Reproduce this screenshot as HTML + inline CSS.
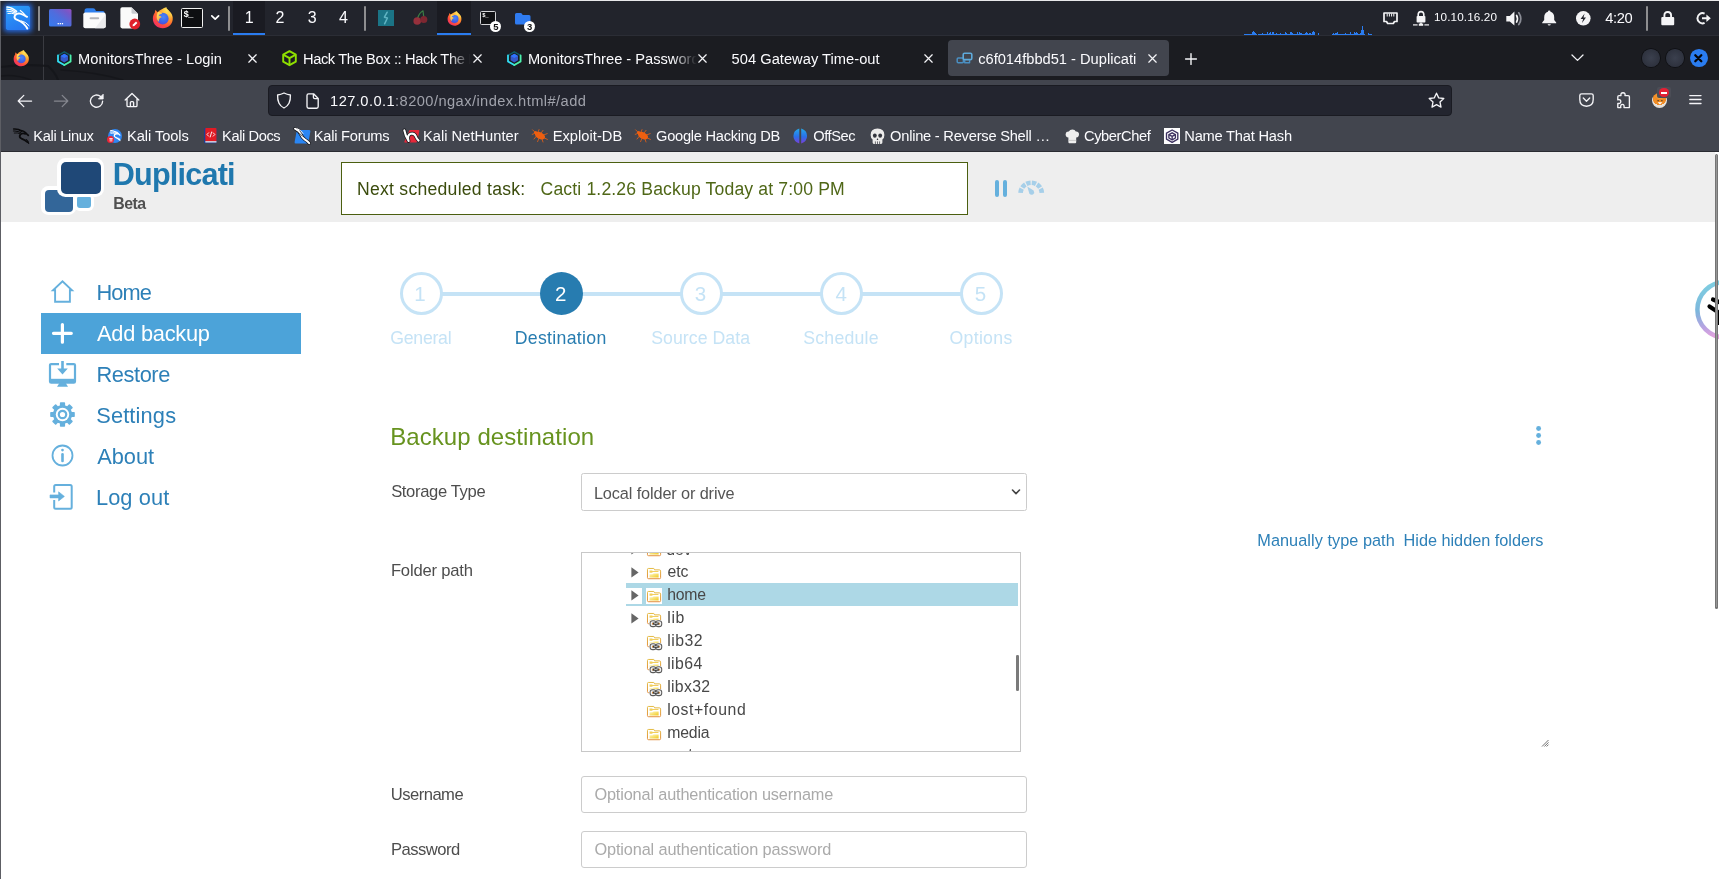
<!DOCTYPE html><html lang="en"><head><meta charset="utf-8"><title>c6f014fbbd51 - Duplicati</title><style>
*{box-sizing:border-box;margin:0;padding:0}
html,body{width:1719px;height:879px;overflow:hidden;background:#fff}
body{position:relative;font-family:'Liberation Sans',sans-serif}
#root{position:absolute;left:0;top:0;width:1719px;height:879px;will-change:transform}
.a{position:absolute}
.t{position:absolute;white-space:pre;line-height:1;display:block}
svg{position:absolute;overflow:visible}
#panel{left:0;top:0;width:1719px;height:36px;background:#22242c}
#tabbar{left:0;top:36px;width:1719px;height:44px;background:#1b1c21}
#navbar{left:0;top:80px;width:1719px;height:40px;background:#42454e}
#bmbar{left:0;top:120px;width:1719px;height:32px;background:#42454e}
#page{left:0;top:152px;width:1719px;height:727px;background:#fff}
#hdr{left:1px;top:152px;width:1714px;height:70px;background:#eeeeee}
.inp{border:1px solid #ccc;border-radius:3px;background:#fff}
</style></head><body><div id="root">
<div class="a" id="panel"></div>
<div class="a" style="left:0;top:0;width:1719px;height:1px;background:#e8e8ea"></div>
<div class="a" style="left:0;top:35px;width:1719px;height:1px;background:#2b2d35"></div>
<div class="a" style="left:38px;top:6px;width:2px;height:25px;background:#8e8e90;border-radius:1px"></div>
<div class="a" style="left:228px;top:6px;width:2px;height:25px;background:#8e8e90;border-radius:1px"></div>
<div class="a" style="left:364px;top:6px;width:2px;height:25px;background:#8e8e90;border-radius:1px"></div>
<div class="a" style="left:1646px;top:6px;width:2px;height:25px;background:#8e8e90;border-radius:1px"></div>
<div class="a" style="left:233px;top:1px;width:32px;height:34px;background:#1a1b22"></div>
<div class="a" style="left:233px;top:33px;width:32px;height:2px;background:#2a7cf0"></div>
<div class="a" style="left:437px;top:1px;width:34px;height:34px;background:#1a1b22"></div>
<div class="a" style="left:437px;top:33px;width:34px;height:2px;background:#2a7cf0"></div>
<span class="t" id="t0" style="left:244.69px;top:9.76px;font-size:16px;color:#fbfbfe;letter-spacing:0.000px;">1</span>
<span class="t" id="t1" style="left:275.44px;top:9.76px;font-size:16px;color:#fbfbfe;letter-spacing:0.000px;">2</span>
<span class="t" id="t2" style="left:307.79px;top:9.76px;font-size:16px;color:#fbfbfe;letter-spacing:0.000px;">3</span>
<span class="t" id="t3" style="left:339.08px;top:9.76px;font-size:16px;color:#fbfbfe;letter-spacing:0.000px;">4</span>
<span class="t" id="t4" style="left:1433.97px;top:11.00px;font-size:11.7px;color:#fbfbfe;letter-spacing:0.122px;">10.10.16.20</span>
<span class="t" id="t5" style="left:1605.34px;top:10.56px;font-size:14.7px;color:#fbfbfe;letter-spacing:-0.441px;">4:20</span>
<div class="a" style="left:5.8px;top:5.8px;width:24.3px;height:24.3px;border-radius:1.5px;background:linear-gradient(160deg,#2aa0fb,#2672ee);box-shadow:0 0 5px 1.5px rgba(38,118,255,.85)"></div><svg style="left:6px;top:6px" width="24" height="24" viewBox="0 0 24 24" preserveAspectRatio="none" ><g fill="none" stroke="#fff" stroke-linecap="round" stroke-linejoin="round">
<path d="M0.9 1.1 Q6 1.4 10.6 5.4" stroke-width="1.5"/><path d="M0.9 3.2 Q5.5 3.2 10 6.2" stroke-width="1.3"/><path d="M1.2 5.3 Q5 5 9.4 7" stroke-width="1.1"/><path d="M1.9 7.4 Q5.5 6.8 9 8" stroke-width="1"/>
<path d="M21 10.8 Q17.5 8.8 14.3 7.6 Q11 6.8 9.2 9 Q7.4 11.8 10.2 13.4 Q14.6 15 17.5 17.6 Q20 20 21.3 22.5" stroke-width="2"/>
<path d="M14.3 4.5 Q16.8 6.4 19 9" stroke-width="1.2"/>
<path d="M15.2 14.8 Q20 15.8 23 19.6" stroke-width="1"/></g></svg><svg style="left:49px;top:9px" width="22.5" height="17.5" viewBox="0 0 22.5 17.5" preserveAspectRatio="none" ><defs><linearGradient id="g1" x1="0" y1="1" x2="1" y2="0"><stop offset="0" stop-color="#357bee"/><stop offset="0.5" stop-color="#4f6ddd"/><stop offset="0.8" stop-color="#7359c9"/><stop offset="1" stop-color="#9650c0"/></linearGradient></defs><rect width="22.5" height="17.5" rx="1.5" fill="url(#g1)"/><g fill="#fff"><rect x="8.6" y="14" width="1.3" height="1.3"/><rect x="10.7" y="14" width="1.3" height="1.3"/><rect x="12.8" y="14" width="1.3" height="1.3"/></g></svg><svg style="left:82.7px;top:8px" width="22.4" height="20.5" viewBox="0 0 22.4 20.5" preserveAspectRatio="none" ><path d="M1.5 3 Q1.5 0.3 4 0.3 L10 0.3 Q11.5 0.3 12.2 1.5 L13 3 L20 3 Q21.5 3 21.5 4.5 L21.5 8 L1.5 8Z" fill="#2f7fec"/>
<path d="M0.3 6.5 Q0.3 4.6 2.3 4.6 L20.7 4.6 Q22.7 4.6 22.7 6.5 L22.7 18.3 Q22.7 20.2 20.7 20.2 L2.3 20.2 Q0.3 20.2 0.3 18.3Z" fill="#fbfbfb"/>
<path d="M22.7 6.5 L22.7 18.3 Q22.7 20.2 20.7 20.2 L12 20.2Z" fill="#ececee"/><rect x="6.6" y="9.3" width="9.6" height="2" rx="1" fill="#b4b5b9"/></svg><svg style="left:119.5px;top:7px" width="22" height="22" viewBox="0 0 22 22" preserveAspectRatio="none" ><path d="M2.2 0.3 L11.5 0.3 L18 6.8 L18 19.6 Q18 21.4 16.2 21.4 L2.2 21.4 Q0.4 21.4 0.4 19.6 L0.4 2.1 Q0.4 0.3 2.2 0.3Z" fill="#fafafa"/>
<path d="M11.5 0.3 L18 6.8 L13 6.8 Q11.5 6.8 11.5 5.3Z" fill="#c9cbd0"/>
<circle cx="14.8" cy="17" r="5.4" fill="#e0202b"/><path d="M12.6 19.3 L12.9 17.6 L16 14.5 L17.4 15.9 L14.3 19 Z" fill="#fff"/></svg><svg style="left:151.5px;top:7px" width="21.6" height="21.6" viewBox="0 0 100 100" preserveAspectRatio="none" ><defs>
<radialGradient id="g2" cx="0.78" cy="0.12" r="1.0"><stop offset="0" stop-color="#fff36b"/><stop offset="0.3" stop-color="#ffbd3f"/><stop offset="0.55" stop-color="#ff8a2a"/><stop offset="0.8" stop-color="#ff4a3c"/><stop offset="1" stop-color="#ee2f68"/></radialGradient>
<radialGradient id="g3" cx="0.55" cy="0.35" r="0.7"><stop offset="0" stop-color="#4a86fa"/><stop offset="0.6" stop-color="#3f66ea"/><stop offset="1" stop-color="#5a45d0"/></radialGradient>
<linearGradient id="g4" x1="0" y1="0" x2="1" y2="1"><stop offset="0" stop-color="#fff36b"/><stop offset="1" stop-color="#ff9a2a"/></linearGradient></defs>
<path d="M50 8 C58 2 62 4 66 0 C68 10 76 14 82 22 C92 30 98 44 96 58 C94 82 74 98 50 98 C24 98 4 80 4 54 C4 44 7 34 13 27 C13 22 14 17 17 13 C19 19 23 22 27 24 C33 16 41 12 50 8Z" fill="url(#g2)"/>
<circle cx="50" cy="54" r="27" fill="url(#g3)"/>
<path d="M27 24 C36 22 44 26 48 33 C40 31 33 35 31 41 C37 40 43 43 45 48 C36 50 30 58 33 68 C22 62 18 46 27 24Z" fill="url(#g4)" opacity="0.95"/>
<path d="M66 0 C68 10 76 14 82 22 C90 30 93 40 92 50 C88 38 80 32 72 30 C74 20 70 10 66 0Z" fill="#ffd04a" opacity="0.9"/></svg><div class="a" style="left:181px;top:8px;width:22px;height:20px;background:#0d0e11;border:1.3px solid #f2f2f2;border-radius:1.5px"></div><span class="a" style="left:183.5px;top:11.2px;font-size:9px;line-height:9px;font-weight:700;color:#fff;font-family:'Liberation Mono',monospace;letter-spacing:-1px">$_</span><svg style="left:210.3px;top:14.4px" width="11" height="8" viewBox="0 0 11 8" preserveAspectRatio="none" ><path d="M1.8 1.8 L5.2 5.2 L8.6 1.8" fill="none" stroke="#fff" stroke-width="1.7" stroke-linecap="round" stroke-linejoin="round"/></svg><div class="a" style="left:378px;top:10px;width:16px;height:16px;background:#1b7486"></div><svg style="left:378px;top:10px" width="16" height="16" viewBox="0 0 16 16" preserveAspectRatio="none" ><path d="M9.2 2.2 L6.4 7.2 L9.4 8 L6.6 13.8" fill="none" stroke="#5fb3c2" stroke-width="1.5" stroke-linejoin="round" stroke-linecap="round"/></svg><svg style="left:412.5px;top:10px" width="15" height="15.5" viewBox="0 0 15 15.5" preserveAspectRatio="none" ><path d="M10 0.8 Q6 3 4.6 8.5 M10 0.8 Q10.5 5 11 8" fill="none" stroke="#3a7f45" stroke-width="1.2" stroke-linecap="round"/>
<circle cx="4.2" cy="11" r="3.8" fill="#96303c"/><circle cx="10.8" cy="9.6" r="3.5" fill="#7d2731"/></svg><svg style="left:446.5px;top:10.5px" width="15" height="15" viewBox="0 0 100 100" preserveAspectRatio="none" ><defs>
<radialGradient id="g5" cx="0.78" cy="0.12" r="1.0"><stop offset="0" stop-color="#fff36b"/><stop offset="0.3" stop-color="#ffbd3f"/><stop offset="0.55" stop-color="#ff8a2a"/><stop offset="0.8" stop-color="#ff4a3c"/><stop offset="1" stop-color="#ee2f68"/></radialGradient>
<radialGradient id="g6" cx="0.55" cy="0.35" r="0.7"><stop offset="0" stop-color="#4a86fa"/><stop offset="0.6" stop-color="#3f66ea"/><stop offset="1" stop-color="#5a45d0"/></radialGradient>
<linearGradient id="g7" x1="0" y1="0" x2="1" y2="1"><stop offset="0" stop-color="#fff36b"/><stop offset="1" stop-color="#ff9a2a"/></linearGradient></defs>
<path d="M50 8 C58 2 62 4 66 0 C68 10 76 14 82 22 C92 30 98 44 96 58 C94 82 74 98 50 98 C24 98 4 80 4 54 C4 44 7 34 13 27 C13 22 14 17 17 13 C19 19 23 22 27 24 C33 16 41 12 50 8Z" fill="url(#g5)"/>
<circle cx="50" cy="54" r="27" fill="url(#g6)"/>
<path d="M27 24 C36 22 44 26 48 33 C40 31 33 35 31 41 C37 40 43 43 45 48 C36 50 30 58 33 68 C22 62 18 46 27 24Z" fill="url(#g7)" opacity="0.95"/>
<path d="M66 0 C68 10 76 14 82 22 C90 30 93 40 92 50 C88 38 80 32 72 30 C74 20 70 10 66 0Z" fill="#ffd04a" opacity="0.9"/></svg><div class="a" style="left:480px;top:11px;width:16px;height:13.5px;background:#101114;border:1.3px solid #d4d5d8;border-radius:1.5px"></div><span class="a" style="left:482.3px;top:12.6px;font-size:5.5px;line-height:6px;font-weight:700;color:#fff;font-family:'Liberation Mono',monospace;letter-spacing:-0.4px">$_</span><div class="a" style="left:490.3px;top:21.1px;width:11px;height:11px;border-radius:50%;background:#fff"></div><span class="a" style="left:490.3px;top:21.1px;width:11px;height:11px;line-height:11px;text-align:center;font-size:9.5px;font-weight:700;color:#111">5</span><svg style="left:514.5px;top:12.5px" width="15.5" height="11.5" viewBox="0 0 15.5 11.5" preserveAspectRatio="none" ><path d="M0 1.5 Q0 0 1.5 0 L5.5 0 Q6.6 0 7.1 0.9 L7.7 2 L14 2 Q15.5 2 15.5 3.5 L15.5 10 Q15.5 11.5 14 11.5 L1.5 11.5 Q0 11.5 0 10Z" fill="#2f7bf0"/></svg><div class="a" style="left:524.2px;top:21.1px;width:11px;height:11px;border-radius:50%;background:#fff"></div><span class="a" style="left:524.2px;top:21.1px;width:11px;height:11px;line-height:11px;text-align:center;font-size:9.5px;font-weight:700;color:#111">3</span><svg style="left:1244px;top:26px" width="128" height="9" viewBox="0 0 128 9" preserveAspectRatio="none" ><g fill="#2a7cf0"><rect x="0" y="8" width="1" height="1"/><rect x="1" y="8" width="1" height="1"/><rect x="2" y="8" width="1" height="1"/><rect x="3" y="8" width="1" height="1"/><rect x="4" y="8" width="1" height="1"/><rect x="5" y="8" width="1" height="1"/><rect x="6" y="8" width="1" height="1"/><rect x="7" y="8" width="1" height="1"/><rect x="8" y="6" width="1" height="3"/><rect x="9" y="5" width="1" height="4"/><rect x="10" y="6" width="1" height="3"/><rect x="11" y="7" width="1" height="2"/><rect x="12" y="8" width="1" height="1"/><rect x="14" y="8" width="1" height="1"/><rect x="15" y="8" width="1" height="1"/><rect x="16" y="8" width="1" height="1"/><rect x="17" y="8" width="1" height="1"/><rect x="18" y="7" width="1" height="2"/><rect x="19" y="8" width="1" height="1"/><rect x="20" y="8" width="1" height="1"/><rect x="21" y="8" width="1" height="1"/><rect x="22" y="8" width="1" height="1"/><rect x="23" y="6" width="1" height="3"/><rect x="24" y="8" width="1" height="1"/><rect x="25" y="7" width="1" height="2"/><rect x="26" y="6" width="1" height="3"/><rect x="27" y="8" width="1" height="1"/><rect x="28" y="6" width="1" height="3"/><rect x="29" y="6" width="1" height="3"/><rect x="30" y="8" width="1" height="1"/><rect x="31" y="8" width="1" height="1"/><rect x="32" y="7" width="1" height="2"/><rect x="33" y="8" width="1" height="1"/><rect x="34" y="8" width="1" height="1"/><rect x="35" y="8" width="1" height="1"/><rect x="36" y="7" width="1" height="2"/><rect x="37" y="8" width="1" height="1"/><rect x="38" y="8" width="1" height="1"/><rect x="39" y="8" width="1" height="1"/><rect x="40" y="8" width="1" height="1"/><rect x="41" y="6" width="1" height="3"/><rect x="42" y="7" width="1" height="2"/><rect x="43" y="8" width="1" height="1"/><rect x="44" y="8" width="1" height="1"/><rect x="45" y="8" width="1" height="1"/><rect x="46" y="6" width="1" height="3"/><rect x="47" y="6" width="1" height="3"/><rect x="48" y="7" width="1" height="2"/><rect x="49" y="8" width="1" height="1"/><rect x="50" y="8" width="1" height="1"/><rect x="51" y="8" width="1" height="1"/><rect x="52" y="8" width="1" height="1"/><rect x="53" y="6" width="1" height="3"/><rect x="54" y="8" width="1" height="1"/><rect x="55" y="6" width="1" height="3"/><rect x="56" y="7" width="1" height="2"/><rect x="57" y="7" width="1" height="2"/><rect x="58" y="8" width="1" height="1"/><rect x="59" y="8" width="1" height="1"/><rect x="60" y="8" width="1" height="1"/><rect x="61" y="7" width="1" height="2"/><rect x="62" y="6" width="1" height="3"/><rect x="63" y="7" width="1" height="2"/><rect x="64" y="8" width="1" height="1"/><rect x="65" y="7" width="1" height="2"/><rect x="66" y="7" width="1" height="2"/><rect x="67" y="8" width="1" height="1"/><rect x="68" y="6" width="1" height="3"/><rect x="69" y="5" width="1" height="4"/><rect x="70" y="6" width="1" height="3"/><rect x="74" y="7" width="1" height="2"/><rect x="88" y="8" width="1" height="1"/><rect x="89" y="7" width="1" height="2"/><rect x="90" y="8" width="1" height="1"/><rect x="91" y="7" width="1" height="2"/><rect x="92" y="7" width="1" height="2"/><rect x="93" y="6" width="1" height="3"/><rect x="94" y="8" width="1" height="1"/><rect x="95" y="8" width="1" height="1"/><rect x="96" y="8" width="1" height="1"/><rect x="97" y="8" width="1" height="1"/><rect x="98" y="8" width="1" height="1"/><rect x="99" y="8" width="1" height="1"/><rect x="100" y="8" width="1" height="1"/><rect x="101" y="7" width="1" height="2"/><rect x="102" y="8" width="1" height="1"/><rect x="103" y="8" width="1" height="1"/><rect x="104" y="8" width="1" height="1"/><rect x="105" y="8" width="1" height="1"/><rect x="106" y="6" width="1" height="3"/><rect x="107" y="8" width="1" height="1"/><rect x="108" y="8" width="1" height="1"/><rect x="109" y="8" width="1" height="1"/><rect x="110" y="6" width="1" height="3"/><rect x="111" y="7" width="1" height="2"/><rect x="112" y="6" width="1" height="3"/><rect x="113" y="7" width="1" height="2"/><rect x="114" y="8" width="1" height="1"/><rect x="115" y="8" width="1" height="1"/><rect x="116" y="7" width="1" height="2"/><rect x="117" y="4" width="1" height="5"/><rect x="118" y="0" width="1" height="9"/><rect x="119" y="4" width="1" height="5"/><rect x="120" y="8" width="1" height="1"/><rect x="124" y="7" width="1" height="2"/><rect x="125" y="8" width="1" height="1"/><rect x="126" y="8" width="1" height="1"/><rect x="127" y="8" width="1" height="1"/></g></svg><svg style="left:1383px;top:11.5px" width="15" height="12.5" viewBox="0 0 15 12.5" preserveAspectRatio="none" ><path d="M1 1 L14 1 L14 9.5 L11.5 9.5 L10.3 11.5 L4.7 11.5 L3.5 9.5 L1 9.5Z" fill="none" stroke="#f4f4f6" stroke-width="1.7" stroke-linejoin="round"/>
<path d="M4.2 1.5 V4.5 M6.4 1.5 V4.5 M8.6 1.5 V4.5 M10.8 1.5 V4.5" stroke="#f4f4f6" stroke-width="1"/></svg><svg style="left:1413px;top:10px" width="16" height="16" viewBox="0 0 16 16" preserveAspectRatio="none" ><path d="M5.2 6.5 V4.6 Q5.2 1.6 8 1.6 Q10.8 1.6 10.8 4.6 V6.5" fill="none" stroke="#f4f4f6" stroke-width="1.6"/>
<rect x="3.6" y="6" width="8.8" height="6.6" rx="0.8" fill="#f4f4f6"/>
<rect x="7.2" y="12.6" width="1.6" height="1.6" fill="#f4f4f6"/><rect x="5.8" y="13.6" width="4.4" height="2.2" fill="#f4f4f6"/>
<rect x="0" y="14.3" width="4.6" height="1.2" fill="#f4f4f6"/><rect x="11.4" y="14.3" width="4.6" height="1.2" fill="#f4f4f6"/></svg><svg style="left:1506px;top:10.5px" width="17.5" height="15.5" viewBox="0 0 17.5 15.5" preserveAspectRatio="none" ><path d="M0.3 5 L3.8 5 L8.4 0.6 L8.4 14.6 L3.8 10.4 L0.3 10.4Z" fill="#f4f4f6"/>
<path d="M10.6 4.4 Q12.4 7.7 10.6 11" fill="none" stroke="#f4f4f6" stroke-width="1.7" stroke-linecap="round"/>
<path d="M12.8 1.8 Q16.8 7.7 12.8 13.6" fill="none" stroke="#8b8d96" stroke-width="1.7" stroke-linecap="round"/></svg><svg style="left:1542px;top:9.5px" width="14.5" height="16" viewBox="0 0 14.5 16" preserveAspectRatio="none" ><path d="M7.2 0.4 Q8.5 0.4 8.5 1.7 Q12.2 2.8 12.2 7.2 L12.2 10 L14.2 12.4 L14.2 13.2 L0.2 13.2 L0.2 12.4 L2.2 10 L2.2 7.2 Q2.2 2.8 5.9 1.7 Q5.9 0.4 7.2 0.4Z" fill="#f4f4f6"/>
<path d="M5.6 14.2 L8.8 14.2 Q8.6 15.6 7.2 15.6 Q5.8 15.6 5.6 14.2Z" fill="#f4f4f6"/></svg><svg style="left:1575.5px;top:11px" width="14.6" height="14.6" viewBox="0 0 14.6 14.6" preserveAspectRatio="none" ><circle cx="7.3" cy="7.3" r="7.3" fill="#f4f4f6"/><path d="M8.6 2.6 L4.6 8 L7.1 8 L6 12 L10 6.6 L7.5 6.6Z" fill="#22242c"/></svg><svg style="left:1661px;top:11px" width="13.5" height="14.5" viewBox="0 0 13.5 14.5" preserveAspectRatio="none" ><path d="M3.4 6.4 V4.6 Q3.4 1 6.75 1 Q10.1 1 10.1 4.6 V6.4" fill="none" stroke="#f4f4f6" stroke-width="1.9"/><rect x="0.3" y="6" width="12.9" height="8.3" rx="1" fill="#f4f4f6"/></svg><svg style="left:1695.5px;top:12px" width="15" height="12.5" viewBox="0 0 15 12.5" preserveAspectRatio="none" ><path d="M8.6 1.6 A5.1 5.1 0 1 0 8.6 10.9" fill="none" stroke="#f4f4f6" stroke-width="2" stroke-linecap="butt"/><path d="M6 5.2 L10.4 5.2 L10.4 2.6 L14.8 6.25 L10.4 9.9 L10.4 7.3 L6 7.3Z" fill="#f4f4f6"/></svg>
<div class="a" id="tabbar"></div>
<div class="a" style="left:43px;top:36px;width:1px;height:44px;background:#3a3b41"></div>
<div class="a" style="left:948px;top:40px;width:221px;height:36px;background:#42454e;border-radius:4px"></div>
<span class="t" id="t6" style="left:78.05px;top:51.58px;font-size:14.67px;color:#fbfbfe;letter-spacing:0.028px;">MonitorsThree - Login</span>
<span class="t fade" id="t7" style="left:302.93px;top:51.58px;font-size:14.67px;color:#fbfbfe;letter-spacing:-0.374px;">Hack The Box :: Hack The B</span>
<span class="t fade" id="t8" style="left:527.93px;top:51.58px;font-size:14.67px;color:#fbfbfe;letter-spacing:-0.010px;">MonitorsThree - Password</span>
<span class="t" id="t9" style="left:731.54px;top:51.58px;font-size:14.67px;color:#fbfbfe;letter-spacing:0.034px;">504 Gateway Time-out</span>
<span class="t" id="t10" style="left:978.16px;top:51.58px;font-size:14.67px;color:#fbfbfe;letter-spacing:-0.000px;">c6f014fbbd51 - Duplicati</span>
<svg style="left:1px;top:36px" width="260" height="44" viewBox="0 0 260 44" preserveAspectRatio="none" ><g fill="none" stroke="#15161a" stroke-linecap="round" opacity="0.85"><path d="M0 31 Q22 28 47 30 Q54 36 57 44" stroke-width="2.2"/><path d="M60 34 Q95 36 122 44" stroke-width="1.6"/><path d="M0 40 Q14 38 30 44" stroke-width="1.4"/></g></svg><svg style="left:12.5px;top:50px" width="16.5" height="16.5" viewBox="0 0 100 100" preserveAspectRatio="none" ><defs>
<radialGradient id="g8" cx="0.78" cy="0.12" r="1.0"><stop offset="0" stop-color="#fff36b"/><stop offset="0.3" stop-color="#ffbd3f"/><stop offset="0.55" stop-color="#ff8a2a"/><stop offset="0.8" stop-color="#ff4a3c"/><stop offset="1" stop-color="#ee2f68"/></radialGradient>
<radialGradient id="g9" cx="0.55" cy="0.35" r="0.7"><stop offset="0" stop-color="#4a86fa"/><stop offset="0.6" stop-color="#3f66ea"/><stop offset="1" stop-color="#5a45d0"/></radialGradient>
<linearGradient id="g10" x1="0" y1="0" x2="1" y2="1"><stop offset="0" stop-color="#fff36b"/><stop offset="1" stop-color="#ff9a2a"/></linearGradient></defs>
<path d="M50 8 C58 2 62 4 66 0 C68 10 76 14 82 22 C92 30 98 44 96 58 C94 82 74 98 50 98 C24 98 4 80 4 54 C4 44 7 34 13 27 C13 22 14 17 17 13 C19 19 23 22 27 24 C33 16 41 12 50 8Z" fill="url(#g8)"/>
<circle cx="50" cy="54" r="27" fill="url(#g9)"/>
<path d="M27 24 C36 22 44 26 48 33 C40 31 33 35 31 41 C37 40 43 43 45 48 C36 50 30 58 33 68 C22 62 18 46 27 24Z" fill="url(#g10)" opacity="0.95"/>
<path d="M66 0 C68 10 76 14 82 22 C90 30 93 40 92 50 C88 38 80 32 72 30 C74 20 70 10 66 0Z" fill="#ffd04a" opacity="0.9"/></svg><svg style="left:56.9px;top:51px" width="14.6" height="14.8" viewBox="0 0 14.6 14.8" preserveAspectRatio="none" ><path d="M7.3 0.8 L13.6 4.3 L13.6 10.5 L7.3 14 L1 10.5 L1 4.3Z" fill="none" stroke="#0f5a66" stroke-width="1.5" stroke-linejoin="round"/>
<path d="M1 4.3 L1 10.5 L7.3 14" fill="none" stroke="#35dff5" stroke-width="1.7" stroke-linejoin="round" stroke-linecap="round"/>
<path d="M7.3 14 L13.6 10.5 L13.6 4.3" fill="none" stroke="#4ff0a8" stroke-width="1.7" stroke-linejoin="round" stroke-linecap="round"/>
<path d="M7.3 2.8 L11 4.9 L11 9.2 L7.3 11.4 L3.6 9.2 L3.6 4.9Z" fill="#3558c8"/><path d="M7.3 2.8 L11 4.9 L7.3 7 L3.6 4.9Z" fill="#2f74ff"/></svg><svg style="left:506.9px;top:51px" width="14.6" height="14.8" viewBox="0 0 14.6 14.8" preserveAspectRatio="none" ><path d="M7.3 0.8 L13.6 4.3 L13.6 10.5 L7.3 14 L1 10.5 L1 4.3Z" fill="none" stroke="#0f5a66" stroke-width="1.5" stroke-linejoin="round"/>
<path d="M1 4.3 L1 10.5 L7.3 14" fill="none" stroke="#35dff5" stroke-width="1.7" stroke-linejoin="round" stroke-linecap="round"/>
<path d="M7.3 14 L13.6 10.5 L13.6 4.3" fill="none" stroke="#4ff0a8" stroke-width="1.7" stroke-linejoin="round" stroke-linecap="round"/>
<path d="M7.3 2.8 L11 4.9 L11 9.2 L7.3 11.4 L3.6 9.2 L3.6 4.9Z" fill="#3558c8"/><path d="M7.3 2.8 L11 4.9 L7.3 7 L3.6 4.9Z" fill="#2f74ff"/></svg><svg style="left:281.5px;top:49.8px" width="15" height="16.4" viewBox="0 0 15 16.4" preserveAspectRatio="none" ><g fill="none" stroke="#8fe000" stroke-width="1.9" stroke-linejoin="round"><path d="M7.5 1.2 L13.8 4.7 L13.8 11.7 L7.5 15.2 L1.2 11.7 L1.2 4.7Z"/><path d="M1.2 4.7 L7.5 8.2 L13.8 4.7 M7.5 8.2 L7.5 15.2"/></g></svg><svg style="left:955.5px;top:52px" width="17" height="12" viewBox="0 0 17 12" preserveAspectRatio="none" ><g fill="none" stroke-linejoin="round"><rect x="1.2" y="6" width="6.2" height="4.8" rx="1" stroke="#4a8fc2" stroke-width="1.5"/>
<path d="M8.7 8.3 V10.8 H13.6 V8.3" stroke="#4a8fc2" stroke-width="1.4"/>
<rect x="7.2" y="1.2" width="8.6" height="6.4" rx="1.4" stroke="#5eaadb" stroke-width="1.6" fill="#42454e"/></g></svg><div class="a fd" style="left:449px;top:46px;width:36px;height:24px;background:linear-gradient(90deg,rgba(27,28,33,0),#1b1c21 60%)"></div><div class="a fd" style="left:673px;top:46px;width:36px;height:24px;background:linear-gradient(90deg,rgba(27,28,33,0),#1b1c21 66%)"></div><svg style="left:248.3px;top:53.9px" width="9" height="9" viewBox="0 0 9 9" preserveAspectRatio="none" ><path d="M0.8 0.8 L8.2 8.2 M8.2 0.8 L0.8 8.2" stroke="#f4f4f7" stroke-width="1.25" stroke-linecap="round"/></svg><svg style="left:473.4px;top:53.9px" width="9" height="9" viewBox="0 0 9 9" preserveAspectRatio="none" ><path d="M0.8 0.8 L8.2 8.2 M8.2 0.8 L0.8 8.2" stroke="#f4f4f7" stroke-width="1.25" stroke-linecap="round"/></svg><svg style="left:698.4px;top:53.9px" width="9" height="9" viewBox="0 0 9 9" preserveAspectRatio="none" ><path d="M0.8 0.8 L8.2 8.2 M8.2 0.8 L0.8 8.2" stroke="#f4f4f7" stroke-width="1.25" stroke-linecap="round"/></svg><svg style="left:923.6px;top:53.9px" width="9" height="9" viewBox="0 0 9 9" preserveAspectRatio="none" ><path d="M0.8 0.8 L8.2 8.2 M8.2 0.8 L0.8 8.2" stroke="#f4f4f7" stroke-width="1.25" stroke-linecap="round"/></svg><svg style="left:1148.4px;top:53.9px" width="9" height="9" viewBox="0 0 9 9" preserveAspectRatio="none" ><path d="M0.8 0.8 L8.2 8.2 M8.2 0.8 L0.8 8.2" stroke="#f4f4f7" stroke-width="1.25" stroke-linecap="round"/></svg><svg style="left:1184.5px;top:52.7px" width="12" height="12" viewBox="0 0 12 12" preserveAspectRatio="none" ><path d="M6 0.6 V11.4 M0.6 6 H11.4" stroke="#f4f4f7" stroke-width="1.4" stroke-linecap="round"/></svg><svg style="left:1570.5px;top:54px" width="13" height="8" viewBox="0 0 13 8" preserveAspectRatio="none" ><path d="M1 1 L6.5 6.4 L12 1" fill="none" stroke="#f4f4f7" stroke-width="1.3" stroke-linecap="round" stroke-linejoin="round"/></svg><div class="a" style="left:1642px;top:49.3px;width:17.6px;height:17.6px;border-radius:50%;background:radial-gradient(circle at 50% 50%,#3b404e 0,#2e323e 70%,#262a34 100%);box-shadow:0 0 0 0.8px #0d0e12"></div><div class="a" style="left:1666px;top:49.3px;width:17.6px;height:17.6px;border-radius:50%;background:radial-gradient(circle at 50% 50%,#3b404e 0,#2e323e 70%,#262a34 100%);box-shadow:0 0 0 0.8px #0d0e12"></div><div class="a" style="left:1689.8px;top:49.3px;width:17.8px;height:17.8px;border-radius:50%;background:#2a7cf0"></div><svg style="left:1694.4px;top:53.9px" width="8.6" height="8.6" viewBox="0 0 8.6 8.6" preserveAspectRatio="none" ><path d="M1.3 1.3 L7.3 7.3 M7.3 1.3 L1.3 7.3" stroke="#050508" stroke-width="2.3" stroke-linecap="round"/></svg>
<div class="a" id="navbar"></div>
<div class="a" id="bmbar"></div>
<div class="a" style="left:0;top:151px;width:1719px;height:1px;background:#2a2b31"></div>
<div class="a" style="left:268px;top:84.5px;width:1183.5px;height:31px;background:#23252f;border-radius:4px;border:1px solid #1a1b22"></div>
<span class="t" id="t11" style="left:330.12px;top:93.83px;font-size:14.67px;color:#fbfbfe;letter-spacing:0.428px;">127.0.0.1<span style="color:#a0a2ab">:8200/ngax/index.html#/add</span></span>
<svg style="left:17px;top:93.7px" width="15" height="14" viewBox="0 0 15 14" preserveAspectRatio="none" ><path d="M6.8 1.4 L1.2 7 L6.8 12.6 M1.4 7 H14.6" fill="none" stroke="#f4f4f7" stroke-width="1.25" stroke-linecap="round" stroke-linejoin="round"/></svg><svg style="left:53.5px;top:93.5px" width="15" height="14" viewBox="0 0 15 14" preserveAspectRatio="none" ><path d="M8.2 1.4 L13.8 7 L8.2 12.6 M13.6 7 H0.4" fill="none" stroke="#85878f" stroke-width="1.25" stroke-linecap="round" stroke-linejoin="round"/></svg><svg style="left:88.6px;top:92.5px" width="16" height="16" viewBox="0 0 16 16" preserveAspectRatio="none" ><path d="M13.6 8.2 A6.1 6.1 0 1 1 11.6 3.6" fill="none" stroke="#f4f4f7" stroke-width="1.35" stroke-linecap="round"/><path d="M14.2 1.2 L14.2 6 L9.4 6 Z" fill="#f4f4f7" stroke="#f4f4f7" stroke-width="0.8" stroke-linejoin="round"/></svg><svg style="left:123.8px;top:92px" width="16" height="16" viewBox="0 0 16 16" preserveAspectRatio="none" ><path d="M1.2 8 L8 1.4 L14.8 8 M3 6.6 V13.4 Q3 14.6 4.2 14.6 H11.8 Q13 14.6 13 13.4 V6.6 M6.4 14.4 V10.6 Q6.4 9.6 7.4 9.6 H8.6 Q9.6 9.6 9.6 10.6 V14.4" fill="none" stroke="#f4f4f7" stroke-width="1.35" stroke-linecap="round" stroke-linejoin="round"/></svg><svg style="left:276px;top:92px" width="16" height="17" viewBox="0 0 16 17" preserveAspectRatio="none" ><path d="M8 1 Q11 2.6 14.4 3 Q14.6 8 13 11.2 Q11.4 14.4 8 16 Q4.6 14.4 3 11.2 Q1.4 8 1.6 3 Q5 2.6 8 1Z" fill="none" stroke="#f4f4f7" stroke-width="1.35" stroke-linejoin="round"/></svg><svg style="left:305.5px;top:92.5px" width="13" height="16" viewBox="0 0 13 16" preserveAspectRatio="none" ><path d="M2.6 0.8 H7.6 L12.2 5.4 V13.6 Q12.2 15.2 10.6 15.2 H2.6 Q1 15.2 1 13.6 V2.4 Q1 0.8 2.6 0.8Z M7.4 1 V4.2 Q7.4 5.6 8.8 5.6 H12" fill="none" stroke="#f4f4f7" stroke-width="1.35" stroke-linejoin="round"/></svg><svg style="left:1427.5px;top:92px" width="17" height="16.5" viewBox="0 0 17 16.5" preserveAspectRatio="none" ><path d="M8.5 1.2 L10.7 5.9 L15.8 6.5 L12 10 L13 15.1 L8.5 12.6 L4 15.1 L5 10 L1.2 6.5 L6.3 5.9Z" fill="none" stroke="#f4f4f7" stroke-width="1.3" stroke-linejoin="round"/></svg><svg style="left:1579.3px;top:93.3px" width="15" height="14" viewBox="0 0 15 14" preserveAspectRatio="none" ><path d="M2.6 0.8 H12.4 Q14.2 0.8 14.2 2.6 V6.6 Q14.2 13.2 7.5 13.2 Q0.8 13.2 0.8 6.6 V2.6 Q0.8 0.8 2.6 0.8Z M4.3 5 L7.5 8.2 L10.7 5" fill="none" stroke="#f4f4f7" stroke-width="1.35" stroke-linecap="round" stroke-linejoin="round"/></svg><svg style="left:1616px;top:91.8px" width="15" height="16.6" viewBox="0 0 15 16.6" preserveAspectRatio="none" ><path d="M5 3.6 Q4.4 0.8 7 0.8 Q9.6 0.8 9 3.6 H12.2 Q13.4 3.6 13.4 4.8 V15.6 H8 Q8.6 12.4 6.4 12.4 Q4.2 12.4 4.8 15.6 H1.8 V11.4 Q4.8 12 4.8 9.6 Q4.8 7.2 1.8 7.8 V4.8 Q1.8 3.6 3 3.6Z" fill="none" stroke="#f4f4f7" stroke-width="1.35" stroke-linejoin="round"/></svg><div class="a" style="left:1651.5px;top:92.8px;width:15.5px;height:15.5px;border-radius:50%;background:radial-gradient(circle at 50% 35%,#f6a13a 0,#f08a24 55%,#e9e4de 56%,#d8d3cc 100%)"></div><svg style="left:1653.5px;top:95.5px" width="12" height="10" viewBox="0 0 12 10" preserveAspectRatio="none" ><path d="M1 1 L4 3 H8 L11 1 L10.4 5.4 L6 9 L1.6 5.4Z" fill="#ef8a22"/><path d="M3.6 6.2 L6 8.6 L8.4 6.2Z" fill="#fff"/><circle cx="4.1" cy="4.7" r="0.6" fill="#222"/><circle cx="7.9" cy="4.7" r="0.6" fill="#222"/></svg><div class="a" style="left:1657px;top:87px;width:13.6px;height:11px;background:#4b4d56;border-radius:2px"></div><div class="a" style="left:1659px;top:87.8px;width:9.6px;height:9.6px;border-radius:50%;background:#e22035"></div><div class="a" style="left:1660.6px;top:91.6px;width:6.4px;height:2px;background:#fff"></div><svg style="left:1688.5px;top:94.3px" width="13" height="11" viewBox="0 0 13 11" preserveAspectRatio="none" ><path d="M0.8 1.6 H12 M0.8 5.5 H12 M0.8 9.5 H12" stroke="#f4f4f7" stroke-width="1.35" stroke-linecap="round"/></svg>
<span class="t" id="t12" style="left:33.29px;top:128.83px;font-size:14.67px;color:#fbfbfe;letter-spacing:-0.328px;">Kali Linux</span>
<span class="t" id="t13" style="left:127.01px;top:128.83px;font-size:14.67px;color:#fbfbfe;letter-spacing:-0.065px;">Kali Tools</span>
<span class="t" id="t14" style="left:222.01px;top:128.83px;font-size:14.67px;color:#fbfbfe;letter-spacing:-0.400px;">Kali Docs</span>
<span class="t" id="t15" style="left:313.66px;top:128.83px;font-size:14.67px;color:#fbfbfe;letter-spacing:-0.218px;">Kali Forums</span>
<span class="t" id="t16" style="left:423.01px;top:128.83px;font-size:14.67px;color:#fbfbfe;letter-spacing:0.022px;">Kali NetHunter</span>
<span class="t" id="t17" style="left:552.64px;top:128.83px;font-size:14.67px;color:#fbfbfe;letter-spacing:0.039px;">Exploit-DB</span>
<span class="t" id="t18" style="left:656.05px;top:128.83px;font-size:14.67px;color:#fbfbfe;letter-spacing:-0.274px;">Google Hacking DB</span>
<span class="t" id="t19" style="left:813.34px;top:128.83px;font-size:14.67px;color:#fbfbfe;letter-spacing:-0.469px;">OffSec</span>
<span class="t" id="t20" style="left:890.06px;top:128.83px;font-size:14.67px;color:#fbfbfe;letter-spacing:-0.232px;">Online - Reverse Shell …</span>
<span class="t" id="t21" style="left:1084.00px;top:128.83px;font-size:14.67px;color:#fbfbfe;letter-spacing:-0.414px;">CyberChef</span>
<span class="t" id="t22" style="left:1184.29px;top:128.83px;font-size:14.67px;color:#fbfbfe;letter-spacing:-0.213px;">Name That Hash</span>
<svg style="left:12.5px;top:127.7px" width="17" height="16" viewBox="0 0 16 16" preserveAspectRatio="none" ><g fill="none" stroke="#0b0b0d" stroke-linecap="round">
<path d="M0.6 1 Q5 0.6 8 3.2" stroke-width="1.4300000000000002"/><path d="M0.4 3 Q4 2.6 7.4 4.6" stroke-width="1.1"/><path d="M1.2 5 Q4 4.4 6.8 5.8" stroke-width="0.8800000000000001"/>
<path d="M6.4 2.2 Q10.6 2.6 13 6 L14.4 7.4" stroke-width="1.6500000000000001"/>
<path d="M11.6 5.8 Q8.2 4.8 6.8 6.8 Q5.4 9.2 8 10.6 Q11.6 12.2 13.6 14.2" stroke-width="1.7600000000000002"/>
<path d="M12.4 11.4 Q14.6 12.8 14.8 15.6" stroke-width="0.9900000000000001"/></g></svg><div class="a" style="left:108px;top:128.7px;width:14.2px;height:14.2px;border-radius:50%;background:#2f86f2"></div><svg style="left:110px;top:130.2px" width="11" height="11" viewBox="0 0 16 16" preserveAspectRatio="none" ><g fill="none" stroke="#fff" stroke-linecap="round">
<path d="M0.6 1 Q5 0.6 8 3.2" stroke-width="1.56"/><path d="M0.4 3 Q4 2.6 7.4 4.6" stroke-width="1.2"/><path d="M1.2 5 Q4 4.4 6.8 5.8" stroke-width="0.96"/>
<path d="M6.4 2.2 Q10.6 2.6 13 6 L14.4 7.4" stroke-width="1.7999999999999998"/>
<path d="M11.6 5.8 Q8.2 4.8 6.8 6.8 Q5.4 9.2 8 10.6 Q11.6 12.2 13.6 14.2" stroke-width="1.92"/>
<path d="M12.4 11.4 Q14.6 12.8 14.8 15.6" stroke-width="1.08"/></g></svg><div class="a" style="left:107px;top:136.2px;width:7.2px;height:7.2px;border-radius:50%;background:#ec2436"></div><svg style="left:108.6px;top:138px" width="4" height="4" viewBox="0 0 4 4" preserveAspectRatio="none" ><path d="M0.3 0.6 H3.7 M1.2 0.6 V3.6 M2.8 0.6 V3.6" stroke="#fff" stroke-width="0.8"/></svg><svg style="left:203.7px;top:128.2px" width="12.5" height="15.3" viewBox="0 0 12.5 15.3" preserveAspectRatio="none" ><rect x="0" y="0" width="12.5" height="15.3" rx="1" fill="#1d3f94"/><rect x="1.3" y="0" width="11.2" height="13.2" rx="0.8" fill="#e01b24"/><rect x="1.3" y="13.2" width="11.2" height="1.3" fill="#f1e9e9"/><path d="M4.6 4.8 L3 6.5 L4.6 8.2 M9.2 4.8 L10.8 6.5 L9.2 8.2 M7.6 4 L6.2 9" fill="none" stroke="#fff" stroke-width="0.9" stroke-linecap="round" stroke-linejoin="round"/></svg><svg style="left:293.5px;top:127.5px" width="17" height="16.5" viewBox="0 0 17 16.5" preserveAspectRatio="none" ><path d="M4.4 1.9 H15.2 Q16.7 1.9 16.4 3.4 L14.4 14.1 Q14.1 15.6 12.6 15.6 H1.8 Q0.3 15.6 0.6 14.1 L2.6 3.4 Q2.9 1.9 4.4 1.9Z" fill="#2a86f3"/><g fill="none" stroke-linecap="round" stroke-linejoin="round"><path d="M1 0.7 Q5 2.5 6.6 6 Q8 9.5 11 11.6 Q13.5 13.2 15.2 15.2" stroke="#14151a" stroke-width="3.4"/><path d="M1 0.7 Q5 2.5 6.6 6 Q8 9.5 11 11.6 Q13.5 13.2 15.2 15.2" stroke="#fff" stroke-width="2"/><path d="M3 0.6 Q7.4 2.4 9 5.4" stroke="#fff" stroke-width="1"/><path d="M5.6 5.4 L8.4 8.2" stroke="#14151a" stroke-width="0.7"/></g></svg><svg style="left:402.5px;top:128px" width="17" height="16" viewBox="0 0 17 16" preserveAspectRatio="none" ><path d="M6.6 2 H15.4 Q16.6 2 16.3 3.2 L14.2 13.3 Q13.9 14.5 12.7 14.5 H2 Q0.8 14.5 1.4 13.4Z" fill="#e5283a"/><g fill="none" stroke-linecap="round" stroke-linejoin="round"><path d="M1.3 2.2 Q2.4 8 5.6 13 Q3.8 7.4 7.6 5.8 Q11.2 4.8 12.6 8 Q13.6 10.8 15.6 12.6" stroke="#14151a" stroke-width="3.6"/><path d="M1.3 2.2 Q2.4 8 5.6 13 Q3.8 7.4 7.6 5.8 Q11.2 4.8 12.6 8 Q13.6 10.8 15.6 12.6" stroke="#fff" stroke-width="2.1"/></g></svg><svg style="left:531.8px;top:129px" width="16" height="13.5" viewBox="0 0 16 13.5" preserveAspectRatio="none" ><g fill="#ee5f10"><ellipse cx="8" cy="6.6" rx="5.4" ry="3.3" transform="rotate(27 8 6.6)"/><circle cx="3.6" cy="3.6" r="1.7"/></g><g stroke="#ee5f10" stroke-width="0.8" fill="none" stroke-linecap="round"><path d="M5.8 3.6 L7 0.6 M8.6 4.6 L11 1.4 M11 6.2 L15.2 4.6 M4.6 7 L2 10 M7 9.2 L5.6 12.6 M10 10 L11 13 M12.4 9 L15.4 10.4 M2.4 2.6 L0.6 0.8 M2.2 4.6 L0.2 5.4"/></g></svg><svg style="left:634.6px;top:129px" width="16" height="13.5" viewBox="0 0 16 13.5" preserveAspectRatio="none" ><g fill="#ee5f10"><ellipse cx="8" cy="6.6" rx="5.4" ry="3.3" transform="rotate(27 8 6.6)"/><circle cx="3.6" cy="3.6" r="1.7"/></g><g stroke="#ee5f10" stroke-width="0.8" fill="none" stroke-linecap="round"><path d="M5.8 3.6 L7 0.6 M8.6 4.6 L11 1.4 M11 6.2 L15.2 4.6 M4.6 7 L2 10 M7 9.2 L5.6 12.6 M10 10 L11 13 M12.4 9 L15.4 10.4 M2.4 2.6 L0.6 0.8 M2.2 4.6 L0.2 5.4"/></g></svg><svg style="left:793px;top:128px" width="14.5" height="16" viewBox="0 0 14.5 16" preserveAspectRatio="none" ><defs><linearGradient id="g11" x1="0" y1="0" x2="0" y2="1"><stop offset="0" stop-color="#25a8e8"/><stop offset="0.55" stop-color="#2a6fe8"/><stop offset="1" stop-color="#7a3fd8"/></linearGradient></defs><path d="M6.3 0.6 Q0.4 2.6 0.4 8 Q0.4 13.4 6.3 15.4Z M8.2 0.6 Q14.1 2.6 14.1 8 Q14.1 13.4 8.2 15.4Z" fill="url(#g11)"/></svg><svg style="left:869.5px;top:127.5px" width="15" height="16.5" viewBox="0 0 15 16.5" preserveAspectRatio="none" ><path d="M7.5 0.5 Q14.4 0.5 14.4 7 Q14.4 10 12.4 11.4 L12.4 14.6 Q12.4 16 11 16 L4 16 Q2.6 16 2.6 14.6 L2.6 11.4 Q0.6 10 0.6 7 Q0.6 0.5 7.5 0.5Z" fill="#ecebea"/><ellipse cx="4.8" cy="7.6" rx="1.9" ry="2.2" fill="#33353d"/><ellipse cx="10.2" cy="7.6" rx="1.9" ry="2.2" fill="#33353d"/><path d="M7.5 10 L6.6 12 H8.4Z" fill="#33353d"/><path d="M5.4 13.4 V16 M7.5 13.4 V16 M9.6 13.4 V16" stroke="#33353d" stroke-width="0.7"/></svg><svg style="left:1065px;top:128.5px" width="14.5" height="14.5" viewBox="0 0 14.5 14.5" preserveAspectRatio="none" ><path d="M3.4 8.6 Q0.4 8 0.6 5 Q1 2.4 3.8 2.6 Q4.8 0.4 7.4 0.4 Q10 0.4 10.8 2.4 Q13.8 2.2 14 5 Q14.2 8 11.2 8.6 L11.2 13.2 Q11.2 14.2 10.2 14.2 L4.4 14.2 Q3.4 14.2 3.4 13.2Z" fill="#efefef"/><path d="M3.4 11.4 H11.2" stroke="#bdbdbd" stroke-width="0.8"/></svg><div class="a" style="left:1163.7px;top:127.5px;width:16.3px;height:16.3px;background:#fdfdfd"></div><svg style="left:1164.7px;top:128.5px" width="14.3" height="14.3" viewBox="0 0 14.3 14.3" preserveAspectRatio="none" ><g fill="none" stroke="#3d3160" stroke-width="1.35" stroke-linejoin="round"><path d="M7.15 1 L12.8 4.1 V10.2 L7.15 13.3 L1.5 10.2 V4.1Z"/><path d="M7.15 3.8 L10.4 5.6 V9 L7.15 10.8 L3.9 9 V5.6Z"/><path d="M3.9 5.6 L7.15 7.4 L10.4 5.6 M7.15 7.4 V10.8"/></g></svg>
<div class="a" id="page"></div>
<div class="a" id="hdr"></div>
<div class="a" style="left:0;top:1px;width:1px;height:878px;background:#5d5e64"></div>
<div class="a" style="left:73.6px;top:192.6px;width:20.8px;height:18.399999999999995px;background:#fff;border-radius:5.9px"></div><div class="a" style="left:77px;top:196px;width:14px;height:11.599999999999994px;background:#65b0dd;border-radius:3px"></div><div class="a" style="left:41.2px;top:186.2px;width:35.199999999999996px;height:29.199999999999996px;background:#fff;border-radius:7.3px"></div><div class="a" style="left:45px;top:190px;width:27.599999999999994px;height:21.599999999999994px;background:#336699;border-radius:4px"></div><div class="a" style="left:57.2px;top:158.2px;width:47.199999999999996px;height:39.199999999999996px;background:#fff;border-radius:8.3px"></div><div class="a" style="left:61px;top:162px;width:39.599999999999994px;height:31.599999999999994px;background:#1f4877;border-radius:5px"></div>
<span class="t" id="t23" style="left:112.70px;top:159.10px;font-size:30.6px;color:#1f78ae;letter-spacing:-0.790px;font-weight:700;">Duplicati</span>
<span class="t" id="t24" style="left:113.30px;top:196.04px;font-size:15.9px;color:#505050;letter-spacing:-0.551px;font-weight:700;">Beta</span>
<div class="a" style="left:341px;top:162px;width:627px;height:53px;background:#fff;border:1px solid #4b5f10"></div>
<span class="t" id="t25" style="left:356.95px;top:180.60px;font-size:17.6px;color:#3a4b0c;letter-spacing:0.263px;">Next scheduled task:</span>
<span class="t" id="t26" style="left:540.54px;top:180.60px;font-size:17.6px;color:#4f6717;letter-spacing:0.150px;">Cacti 1.2.26 Backup Today at 7:00 PM</span>
<div class="a" style="left:994.9px;top:179.9px;width:4.1px;height:17.1px;border-radius:2.1px;background:#65b0dd"></div><div class="a" style="left:1003px;top:179.9px;width:4.1px;height:17.1px;border-radius:2.1px;background:#65b0dd"></div><svg style="left:1017.9px;top:179.6px" width="26.4" height="15" viewBox="0 0 26.4 15" preserveAspectRatio="none" ><path d="M26.18 12.67 A13.0 13.0 0 0 0 24.80 7.54 L20.61 9.66 A8.3 8.3 0 0 1 21.49 12.94ZM24.08 6.28 A13.0 13.0 0 0 0 20.32 2.52 L17.74 6.45 A8.3 8.3 0 0 1 20.15 8.86ZM19.06 1.80 A13.0 13.0 0 0 0 13.93 0.42 L13.66 5.11 A8.3 8.3 0 0 1 16.94 5.99ZM12.47 0.42 A13.0 13.0 0 0 0 7.34 1.80 L9.46 5.99 A8.3 8.3 0 0 1 12.74 5.11ZM6.08 2.52 A13.0 13.0 0 0 0 2.32 6.28 L6.25 8.86 A8.3 8.3 0 0 1 8.66 6.45ZM1.60 7.54 A13.0 13.0 0 0 0 0.22 12.67 L4.91 12.94 A8.3 8.3 0 0 1 5.79 9.66Z" fill="#a6cfe9"/><path d="M9.3 6.6 L15.6 10.4 Q17 12.6 15.2 14.2 Q13.2 15.6 11.4 13.8 Z" fill="#a6cfe9"/></svg>
<div class="a" style="left:41px;top:313px;width:260px;height:40.5px;background:#4ca3d9"></div>
<span class="t" id="t27" style="left:96.52px;top:281.65px;font-size:21.8px;color:#2d80b8;letter-spacing:-0.960px;">Home</span>
<span class="t" id="t28" style="left:97.01px;top:322.65px;font-size:21.8px;color:#fff;letter-spacing:-0.238px;">Add backup</span>
<span class="t" id="t29" style="left:96.52px;top:363.65px;font-size:21.8px;color:#2d80b8;letter-spacing:-0.426px;">Restore</span>
<span class="t" id="t30" style="left:96.20px;top:404.65px;font-size:21.8px;color:#2d80b8;letter-spacing:0.156px;">Settings</span>
<span class="t" id="t31" style="left:97.19px;top:445.95px;font-size:21.8px;color:#2d80b8;letter-spacing:-0.030px;">About</span>
<span class="t" id="t32" style="left:95.92px;top:486.75px;font-size:21.8px;color:#2d80b8;letter-spacing:0.104px;">Log out</span>
<svg style="left:50px;top:279px" width="25" height="25" viewBox="0 0 25 25" preserveAspectRatio="none" ><path d="M5.1 22.7 V11.2 H3 L12.5 2.3 L22 11.2 H19.9 V22.7Z" fill="none" stroke="#65b0dd" stroke-width="1.9" stroke-linejoin="miter"/></svg><svg style="left:50px;top:321px" width="25" height="25" viewBox="0 0 25 25" preserveAspectRatio="none" ><path d="M12.4 3.5 V21.2 M3.5 12.35 H21.3" stroke="#fff" stroke-width="3.2" stroke-linecap="round"/></svg><svg style="left:48px;top:360px" width="29" height="28" viewBox="0 0 29 28" preserveAspectRatio="none" ><path d="M11 4.1 H3.2 Q2 4.1 2 5.3 V21.5 Q2 22.7 3.2 22.7 H25.8 Q27 22.7 27 21.5 V5.3 Q27 4.1 25.8 4.1 H18.3" fill="none" stroke="#65b0dd" stroke-width="2.2"/><rect x="2" y="18.8" width="25" height="3.9" fill="#65b0dd"/><path d="M11.5 22.7 H17.5 L20 26.8 H9Z" fill="#65b0dd"/><path d="M13.2 0.9 H15.8 V8.6 H19.8 L14.5 14.4 L9.2 8.6 H13.2Z" fill="#65b0dd"/></svg><svg style="left:50px;top:401.8px" width="25" height="25" viewBox="0 0 25 25" preserveAspectRatio="none" ><g transform="translate(12.5 12.5)" fill="#65b0dd"><circle r="9.6"/><rect x="-2.6" y="-12.3" width="5.2" height="5" rx="0.8" transform="rotate(0)"/><rect x="-2.6" y="-12.3" width="5.2" height="5" rx="0.8" transform="rotate(45)"/><rect x="-2.6" y="-12.3" width="5.2" height="5" rx="0.8" transform="rotate(90)"/><rect x="-2.6" y="-12.3" width="5.2" height="5" rx="0.8" transform="rotate(135)"/><rect x="-2.6" y="-12.3" width="5.2" height="5" rx="0.8" transform="rotate(180)"/><rect x="-2.6" y="-12.3" width="5.2" height="5" rx="0.8" transform="rotate(225)"/><rect x="-2.6" y="-12.3" width="5.2" height="5" rx="0.8" transform="rotate(270)"/><rect x="-2.6" y="-12.3" width="5.2" height="5" rx="0.8" transform="rotate(315)"/><circle r="6.7" fill="#fff"/><circle r="4.8"/><circle r="2.6" fill="#fff"/></g></svg><svg style="left:50px;top:443.4px" width="25" height="25" viewBox="0 0 25 25" preserveAspectRatio="none" ><circle cx="12.5" cy="12.5" r="10" fill="none" stroke="#65b0dd" stroke-width="1.8"/><circle cx="12.5" cy="7.1" r="1.35" fill="#65b0dd"/><path d="M12.5 11.4 V18" stroke="#65b0dd" stroke-width="2.6" stroke-linecap="round"/></svg><svg style="left:49px;top:483px" width="26" height="28" viewBox="0 0 26 28" preserveAspectRatio="none" ><path d="M5.2 9.5 V3.6 Q5.2 2.1 6.7 2.1 H21.2 Q22.7 2.1 22.7 3.6 V24.2 Q22.7 25.7 21.2 25.7 H6.7 Q5.2 25.7 5.2 24.2 V16.9" fill="none" stroke="#65b0dd" stroke-width="2"/><path d="M1 11.9 H9.6 V8.8 L15.4 13.4 L9.6 18 V14.9 H1Z" fill="#65b0dd" stroke="#65b0dd" stroke-width="0.6" stroke-linejoin="round"/></svg>
<div class="a" style="left:421px;top:292px;width:560px;height:3.5px;background:#c5e3f6"></div>
<div class="a" style="left:399.5px;top:272px;width:43px;height:43px;border-radius:50%;background:#fff;border:3.8px solid #c5e3f6"></div>
<span class="t" id="t33" style="left:414.22px;top:283.65px;font-size:20.5px;color:#c5e3f6;letter-spacing:0.000px;">1</span>
<span class="t" id="t34" style="left:390.27px;top:330.02px;font-size:17.7px;color:#c5e3f6;letter-spacing:-0.260px;">General</span>
<div class="a" style="left:539.5px;top:272px;width:43px;height:43px;border-radius:50%;background:#277cb0"></div>
<span class="t" id="t35" style="left:554.93px;top:283.65px;font-size:20.5px;color:#fff;letter-spacing:0.000px;">2</span>
<span class="t" id="t36" style="left:514.75px;top:330.02px;font-size:17.7px;color:#277cb0;letter-spacing:0.304px;">Destination</span>
<div class="a" style="left:679.5px;top:272px;width:43px;height:43px;border-radius:50%;background:#fff;border:3.8px solid #c5e3f6"></div>
<span class="t" id="t37" style="left:694.84px;top:283.65px;font-size:20.5px;color:#c5e3f6;letter-spacing:0.000px;">3</span>
<span class="t" id="t38" style="left:651.28px;top:330.02px;font-size:17.7px;color:#c5e3f6;letter-spacing:0.039px;">Source Data</span>
<div class="a" style="left:819.5px;top:272px;width:43px;height:43px;border-radius:50%;background:#fff;border:3.8px solid #c5e3f6"></div>
<span class="t" id="t39" style="left:835.56px;top:283.65px;font-size:20.5px;color:#c5e3f6;letter-spacing:0.000px;">4</span>
<span class="t" id="t40" style="left:803.28px;top:330.02px;font-size:17.7px;color:#c5e3f6;letter-spacing:0.214px;">Schedule</span>
<div class="a" style="left:959.5px;top:272px;width:43px;height:43px;border-radius:50%;background:#fff;border:3.8px solid #c5e3f6"></div>
<span class="t" id="t41" style="left:974.68px;top:283.65px;font-size:20.5px;color:#c5e3f6;letter-spacing:0.000px;">5</span>
<span class="t" id="t42" style="left:949.49px;top:330.02px;font-size:17.7px;color:#c5e3f6;letter-spacing:0.298px;">Options</span>
<span class="t" id="t43" style="left:390.21px;top:424.98px;font-size:24px;color:#67931f;letter-spacing:0.068px;">Backup destination</span>
<span class="t" id="t44" style="left:391.13px;top:483.95px;font-size:16.6px;color:#4d4d4d;letter-spacing:-0.352px;">Storage Type</span>
<div class="a inp" style="left:581px;top:473px;width:446px;height:37.5px;border-radius:2.5px"></div>
<span class="t" id="t45" style="left:593.91px;top:485.20px;font-size:16.3px;color:#555;letter-spacing:-0.120px;">Local folder or drive</span>
<svg style="left:1011px;top:488px" width="10" height="8" viewBox="0 0 10 8"><path d="M1.5 2 L5 5.6 L8.5 2" fill="none" stroke="#444" stroke-width="1.6" stroke-linecap="round" stroke-linejoin="round"/></svg>
<span class="t" id="t46" style="left:1257.30px;top:532.20px;font-size:16.3px;color:#2d80b8;letter-spacing:0.045px;">Manually type path</span>
<span class="t" id="t47" style="left:1403.56px;top:532.20px;font-size:16.3px;color:#2d80b8;letter-spacing:-0.019px;">Hide hidden folders</span>
<svg style="left:1535px;top:425px" width="8" height="21" viewBox="0 0 8 21"><g fill="#65b0dd"><circle cx="3.6" cy="3.5" r="2.45"/><circle cx="3.6" cy="10.5" r="2.45"/><circle cx="3.6" cy="17.5" r="2.45"/></g></svg>
<span class="t" id="t48" style="left:390.91px;top:562.85px;font-size:16.6px;color:#4d4d4d;letter-spacing:-0.182px;">Folder path</span>
<div class="a" style="left:626px;top:583.2px;width:392px;height:22.4px;background:#add8e6"></div><div class="a" style="left:626px;top:588px;width:15.8px;height:15.8px;background:#fff"></div><div class="a" style="left:646px;top:588px;width:16px;height:15.8px;background:#fff"></div><svg width="0" height="0" style="left:0;top:0"><defs><linearGradient id="g12" x1="0" y1="0" x2="1" y2="1"><stop offset="0" stop-color="#fdf5c4"/><stop offset="0.5" stop-color="#f8e272"/><stop offset="1" stop-color="#f1c81f"/></linearGradient><linearGradient id="g13" x1="0" y1="0" x2="0" y2="1"><stop offset="0" stop-color="#e2b634"/><stop offset="1" stop-color="#e0862e"/></linearGradient></defs></svg><svg style="left:630.7px;top:544.4000000000001px" width="8" height="11" viewBox="0 0 8 11" preserveAspectRatio="none" ><path d="M0.4 0.3 L7.6 5.4 L0.4 10.5Z" fill="#666"/></svg><svg style="left:646.7px;top:544.9000000000001px" width="15" height="14" viewBox="0 0 16 15" preserveAspectRatio="none" ><path d="M1.5 0.5 H7 Q7.6 0.5 7.8 1.2 L8 2 H13.2 Q14.5 2 14.5 3.3 V10.3 Q14.5 11.5 13.3 11.5 H1.7 Q0.5 11.5 0.5 10.3 V1.5 Q0.5 0.5 1.5 0.5Z" fill="#fff" stroke="url(#g13)" stroke-width="1"/><path d="M2.7 2.6 H5.4 L6.2 3.3 H12.2 V4.3 H6.2 L5.4 5 H2.7Z" fill="#f2cf5c"/><path d="M2.7 6.7 H6 L7 5.8 H12.4 V10.1 H2.7Z" fill="url(#g12)"/></svg><span class="t nofit" id="t53" style="left:666.30px;top:541.63px;font-size:15.8px;color:#484848;letter-spacing:0.000px;">dev</span><svg style="left:630.7px;top:567.4000000000001px" width="8" height="11" viewBox="0 0 8 11" preserveAspectRatio="none" ><path d="M0.4 0.3 L7.6 5.4 L0.4 10.5Z" fill="#666"/></svg><svg style="left:646.7px;top:567.9000000000001px" width="15" height="14" viewBox="0 0 16 15" preserveAspectRatio="none" ><path d="M1.5 0.5 H7 Q7.6 0.5 7.8 1.2 L8 2 H13.2 Q14.5 2 14.5 3.3 V10.3 Q14.5 11.5 13.3 11.5 H1.7 Q0.5 11.5 0.5 10.3 V1.5 Q0.5 0.5 1.5 0.5Z" fill="#fff" stroke="url(#g13)" stroke-width="1"/><path d="M2.7 2.6 H5.4 L6.2 3.3 H12.2 V4.3 H6.2 L5.4 5 H2.7Z" fill="#f2cf5c"/><path d="M2.7 6.7 H6 L7 5.8 H12.4 V10.1 H2.7Z" fill="url(#g12)"/></svg><span class="t" id="t54" style="left:667.59px;top:563.93px;font-size:15.8px;color:#484848;letter-spacing:-0.160px;">etc</span><svg style="left:630.7px;top:590.4000000000001px" width="8" height="11" viewBox="0 0 8 11" preserveAspectRatio="none" ><path d="M0.4 0.3 L7.6 5.4 L0.4 10.5Z" fill="#666"/></svg><svg style="left:646.7px;top:590.9000000000001px" width="15" height="14" viewBox="0 0 16 15" preserveAspectRatio="none" ><path d="M1.5 0.5 H7 Q7.6 0.5 7.8 1.2 L8 2 H13.2 Q14.5 2 14.5 3.3 V10.3 Q14.5 11.5 13.3 11.5 H1.7 Q0.5 11.5 0.5 10.3 V1.5 Q0.5 0.5 1.5 0.5Z" fill="#fff" stroke="url(#g13)" stroke-width="1"/><path d="M2.7 2.6 H5.4 L6.2 3.3 H12.2 V4.3 H6.2 L5.4 5 H2.7Z" fill="#f2cf5c"/><path d="M2.7 6.7 H6 L7 5.8 H12.4 V10.1 H2.7Z" fill="url(#g12)"/></svg><span class="t" id="t55" style="left:667.14px;top:586.93px;font-size:15.8px;color:#484848;letter-spacing:-0.190px;">home</span><svg style="left:630.7px;top:613.4000000000001px" width="8" height="11" viewBox="0 0 8 11" preserveAspectRatio="none" ><path d="M0.4 0.3 L7.6 5.4 L0.4 10.5Z" fill="#666"/></svg><svg style="left:646.7px;top:612.9000000000001px" width="15" height="14" viewBox="0 0 16 15" preserveAspectRatio="none" ><path d="M1.5 0.5 H7 Q7.6 0.5 7.8 1.2 L8 2 H13.2 Q14.5 2 14.5 3.3 V10.3 Q14.5 11.5 13.3 11.5 H1.7 Q0.5 11.5 0.5 10.3 V1.5 Q0.5 0.5 1.5 0.5Z" fill="#fff" stroke="url(#g13)" stroke-width="1"/><path d="M2.7 2.6 H5.4 L6.2 3.3 H12.2 V4.3 H6.2 L5.4 5 H2.7Z" fill="#f2cf5c"/><path d="M2.7 6.7 H6 L7 5.8 H12.4 V10.1 H2.7Z" fill="url(#g12)"/><g><rect x="3.3" y="8.2" width="6.4" height="6.4" rx="2.6" fill="#f4f4f4" stroke="#fff" stroke-width="2"/><rect x="9.3" y="8.2" width="6.4" height="6.4" rx="2.6" fill="#f4f4f4" stroke="#fff" stroke-width="2"/><rect x="3.3" y="8.2" width="6.4" height="6.4" rx="2.6" fill="#f1f1f1" stroke="#5a5a5a" stroke-width="1.1"/><rect x="9.3" y="8.2" width="6.4" height="6.4" rx="2.6" fill="#f1f1f1" stroke="#5a5a5a" stroke-width="1.1"/><rect x="5.6" y="10.3" width="7.8" height="2.2" rx="1.1" fill="#333"/><rect x="7.6" y="11" width="3.8" height="0.8" rx="0.4" fill="#ddd"/><rect x="5.5" y="10.6" width="1" height="1.6" fill="#f0902a"/><rect x="12.5" y="10.6" width="1" height="1.6" fill="#f0902a"/></g></svg><span class="t" id="t56" style="left:667.18px;top:609.93px;font-size:15.8px;color:#484848;letter-spacing:0.697px;">lib</span><svg style="left:646.7px;top:635.9000000000001px" width="15" height="14" viewBox="0 0 16 15" preserveAspectRatio="none" ><path d="M1.5 0.5 H7 Q7.6 0.5 7.8 1.2 L8 2 H13.2 Q14.5 2 14.5 3.3 V10.3 Q14.5 11.5 13.3 11.5 H1.7 Q0.5 11.5 0.5 10.3 V1.5 Q0.5 0.5 1.5 0.5Z" fill="#fff" stroke="url(#g13)" stroke-width="1"/><path d="M2.7 2.6 H5.4 L6.2 3.3 H12.2 V4.3 H6.2 L5.4 5 H2.7Z" fill="#f2cf5c"/><path d="M2.7 6.7 H6 L7 5.8 H12.4 V10.1 H2.7Z" fill="url(#g12)"/><g><rect x="3.3" y="8.2" width="6.4" height="6.4" rx="2.6" fill="#f4f4f4" stroke="#fff" stroke-width="2"/><rect x="9.3" y="8.2" width="6.4" height="6.4" rx="2.6" fill="#f4f4f4" stroke="#fff" stroke-width="2"/><rect x="3.3" y="8.2" width="6.4" height="6.4" rx="2.6" fill="#f1f1f1" stroke="#5a5a5a" stroke-width="1.1"/><rect x="9.3" y="8.2" width="6.4" height="6.4" rx="2.6" fill="#f1f1f1" stroke="#5a5a5a" stroke-width="1.1"/><rect x="5.6" y="10.3" width="7.8" height="2.2" rx="1.1" fill="#333"/><rect x="7.6" y="11" width="3.8" height="0.8" rx="0.4" fill="#ddd"/><rect x="5.5" y="10.6" width="1" height="1.6" fill="#f0902a"/><rect x="12.5" y="10.6" width="1" height="1.6" fill="#f0902a"/></g></svg><span class="t" id="t57" style="left:667.14px;top:632.93px;font-size:15.8px;color:#484848;letter-spacing:0.526px;">lib32</span><svg style="left:646.7px;top:658.9000000000001px" width="15" height="14" viewBox="0 0 16 15" preserveAspectRatio="none" ><path d="M1.5 0.5 H7 Q7.6 0.5 7.8 1.2 L8 2 H13.2 Q14.5 2 14.5 3.3 V10.3 Q14.5 11.5 13.3 11.5 H1.7 Q0.5 11.5 0.5 10.3 V1.5 Q0.5 0.5 1.5 0.5Z" fill="#fff" stroke="url(#g13)" stroke-width="1"/><path d="M2.7 2.6 H5.4 L6.2 3.3 H12.2 V4.3 H6.2 L5.4 5 H2.7Z" fill="#f2cf5c"/><path d="M2.7 6.7 H6 L7 5.8 H12.4 V10.1 H2.7Z" fill="url(#g12)"/><g><rect x="3.3" y="8.2" width="6.4" height="6.4" rx="2.6" fill="#f4f4f4" stroke="#fff" stroke-width="2"/><rect x="9.3" y="8.2" width="6.4" height="6.4" rx="2.6" fill="#f4f4f4" stroke="#fff" stroke-width="2"/><rect x="3.3" y="8.2" width="6.4" height="6.4" rx="2.6" fill="#f1f1f1" stroke="#5a5a5a" stroke-width="1.1"/><rect x="9.3" y="8.2" width="6.4" height="6.4" rx="2.6" fill="#f1f1f1" stroke="#5a5a5a" stroke-width="1.1"/><rect x="5.6" y="10.3" width="7.8" height="2.2" rx="1.1" fill="#333"/><rect x="7.6" y="11" width="3.8" height="0.8" rx="0.4" fill="#ddd"/><rect x="5.5" y="10.6" width="1" height="1.6" fill="#f0902a"/><rect x="12.5" y="10.6" width="1" height="1.6" fill="#f0902a"/></g></svg><span class="t" id="t58" style="left:667.14px;top:655.93px;font-size:15.8px;color:#484848;letter-spacing:0.440px;">lib64</span><svg style="left:646.7px;top:681.9000000000001px" width="15" height="14" viewBox="0 0 16 15" preserveAspectRatio="none" ><path d="M1.5 0.5 H7 Q7.6 0.5 7.8 1.2 L8 2 H13.2 Q14.5 2 14.5 3.3 V10.3 Q14.5 11.5 13.3 11.5 H1.7 Q0.5 11.5 0.5 10.3 V1.5 Q0.5 0.5 1.5 0.5Z" fill="#fff" stroke="url(#g13)" stroke-width="1"/><path d="M2.7 2.6 H5.4 L6.2 3.3 H12.2 V4.3 H6.2 L5.4 5 H2.7Z" fill="#f2cf5c"/><path d="M2.7 6.7 H6 L7 5.8 H12.4 V10.1 H2.7Z" fill="url(#g12)"/><g><rect x="3.3" y="8.2" width="6.4" height="6.4" rx="2.6" fill="#f4f4f4" stroke="#fff" stroke-width="2"/><rect x="9.3" y="8.2" width="6.4" height="6.4" rx="2.6" fill="#f4f4f4" stroke="#fff" stroke-width="2"/><rect x="3.3" y="8.2" width="6.4" height="6.4" rx="2.6" fill="#f1f1f1" stroke="#5a5a5a" stroke-width="1.1"/><rect x="9.3" y="8.2" width="6.4" height="6.4" rx="2.6" fill="#f1f1f1" stroke="#5a5a5a" stroke-width="1.1"/><rect x="5.6" y="10.3" width="7.8" height="2.2" rx="1.1" fill="#333"/><rect x="7.6" y="11" width="3.8" height="0.8" rx="0.4" fill="#ddd"/><rect x="5.5" y="10.6" width="1" height="1.6" fill="#f0902a"/><rect x="12.5" y="10.6" width="1" height="1.6" fill="#f0902a"/></g></svg><span class="t" id="t59" style="left:667.14px;top:678.93px;font-size:15.8px;color:#484848;letter-spacing:0.337px;">libx32</span><svg style="left:646.7px;top:705.9000000000001px" width="15" height="14" viewBox="0 0 16 15" preserveAspectRatio="none" ><path d="M1.5 0.5 H7 Q7.6 0.5 7.8 1.2 L8 2 H13.2 Q14.5 2 14.5 3.3 V10.3 Q14.5 11.5 13.3 11.5 H1.7 Q0.5 11.5 0.5 10.3 V1.5 Q0.5 0.5 1.5 0.5Z" fill="#fff" stroke="url(#g13)" stroke-width="1"/><path d="M2.7 2.6 H5.4 L6.2 3.3 H12.2 V4.3 H6.2 L5.4 5 H2.7Z" fill="#f2cf5c"/><path d="M2.7 6.7 H6 L7 5.8 H12.4 V10.1 H2.7Z" fill="url(#g12)"/></svg><span class="t" id="t60" style="left:667.14px;top:701.93px;font-size:15.8px;color:#484848;letter-spacing:0.579px;">lost+found</span><svg style="left:646.7px;top:728.9000000000001px" width="15" height="14" viewBox="0 0 16 15" preserveAspectRatio="none" ><path d="M1.5 0.5 H7 Q7.6 0.5 7.8 1.2 L8 2 H13.2 Q14.5 2 14.5 3.3 V10.3 Q14.5 11.5 13.3 11.5 H1.7 Q0.5 11.5 0.5 10.3 V1.5 Q0.5 0.5 1.5 0.5Z" fill="#fff" stroke="url(#g13)" stroke-width="1"/><path d="M2.7 2.6 H5.4 L6.2 3.3 H12.2 V4.3 H6.2 L5.4 5 H2.7Z" fill="#f2cf5c"/><path d="M2.7 6.7 H6 L7 5.8 H12.4 V10.1 H2.7Z" fill="url(#g12)"/></svg><span class="t" id="t61" style="left:667.21px;top:724.93px;font-size:15.8px;color:#484848;letter-spacing:-0.162px;">media</span><svg style="left:646.7px;top:751.9000000000001px" width="15" height="14" viewBox="0 0 16 15" preserveAspectRatio="none" ><path d="M1.5 0.5 H7 Q7.6 0.5 7.8 1.2 L8 2 H13.2 Q14.5 2 14.5 3.3 V10.3 Q14.5 11.5 13.3 11.5 H1.7 Q0.5 11.5 0.5 10.3 V1.5 Q0.5 0.5 1.5 0.5Z" fill="#fff" stroke="url(#g13)" stroke-width="1"/><path d="M2.7 2.6 H5.4 L6.2 3.3 H12.2 V4.3 H6.2 L5.4 5 H2.7Z" fill="#f2cf5c"/><path d="M2.7 6.7 H6 L7 5.8 H12.4 V10.1 H2.7Z" fill="url(#g12)"/></svg><span class="t nofit" id="t62" style="left:666.30px;top:746.93px;font-size:15.8px;color:#484848;letter-spacing:0.000px;">mnt</span><div class="a" style="left:581px;top:538px;width:440px;height:14.5px;background:#fff"></div><div class="a" style="left:581px;top:752px;width:440px;height:16px;background:#fff"></div><div class="a" style="left:581px;top:552px;width:440px;height:200px;border:1px solid #c8c8c8"></div><div class="a" style="left:1016.3px;top:655.4px;width:2.6px;height:36px;background:#7a7a7a;border-radius:1.3px"></div>
<span class="t" id="t49" style="left:390.82px;top:786.85px;font-size:16.6px;color:#4d4d4d;letter-spacing:-0.535px;">Username</span>
<div class="a inp" style="left:581px;top:776px;width:446px;height:36.5px"></div>
<span class="t" id="t50" style="left:594.44px;top:785.70px;font-size:16.3px;color:#aaa;letter-spacing:-0.149px;">Optional authentication username</span>
<span class="t" id="t51" style="left:390.91px;top:841.75px;font-size:16.6px;color:#4d4d4d;letter-spacing:-0.495px;">Password</span>
<div class="a inp" style="left:581px;top:831px;width:446px;height:36.5px"></div>
<span class="t" id="t52" style="left:594.44px;top:840.70px;font-size:16.3px;color:#aaa;letter-spacing:-0.124px;">Optional authentication password</span>
<svg style="left:1541.3px;top:739.3px" width="8" height="8" viewBox="0 0 8 8" preserveAspectRatio="none" ><path d="M7.5 1 L1 7.5 M7.5 3.4 L3.4 7.5 M7.5 5.6 L5.6 7.5" stroke="#333" stroke-width="0.7"/></svg><svg style="left:1690px;top:276px" width="29" height="68" viewBox="0 0 29 68" preserveAspectRatio="none" ><defs><linearGradient id="g14" x1="0" y1="0" x2="0.25" y2="1"><stop offset="0" stop-color="#7fd2e2"/><stop offset="0.5" stop-color="#7db6dc"/><stop offset="0.8" stop-color="#b9a3e2"/><stop offset="1" stop-color="#e3a2de"/></linearGradient></defs><circle cx="35.1" cy="33.8" r="27.7" fill="#fff" stroke="url(#g14)" stroke-width="4.5"/><path d="M23 23.5 L29 26 M19.5 30.5 L29 36.8" stroke="#000" stroke-width="4.2" stroke-linecap="round"/><path d="M28.2 37 V49" stroke="#000" stroke-width="3"/></svg><div class="a" style="left:1715.1px;top:153.5px;width:3.3px;height:455px;background:#757575;border-radius:1.6px"></div><div class="a" style="left:1716.1px;top:155px;width:1.3px;height:452px;background:#969696"></div>
</div></body></html>
